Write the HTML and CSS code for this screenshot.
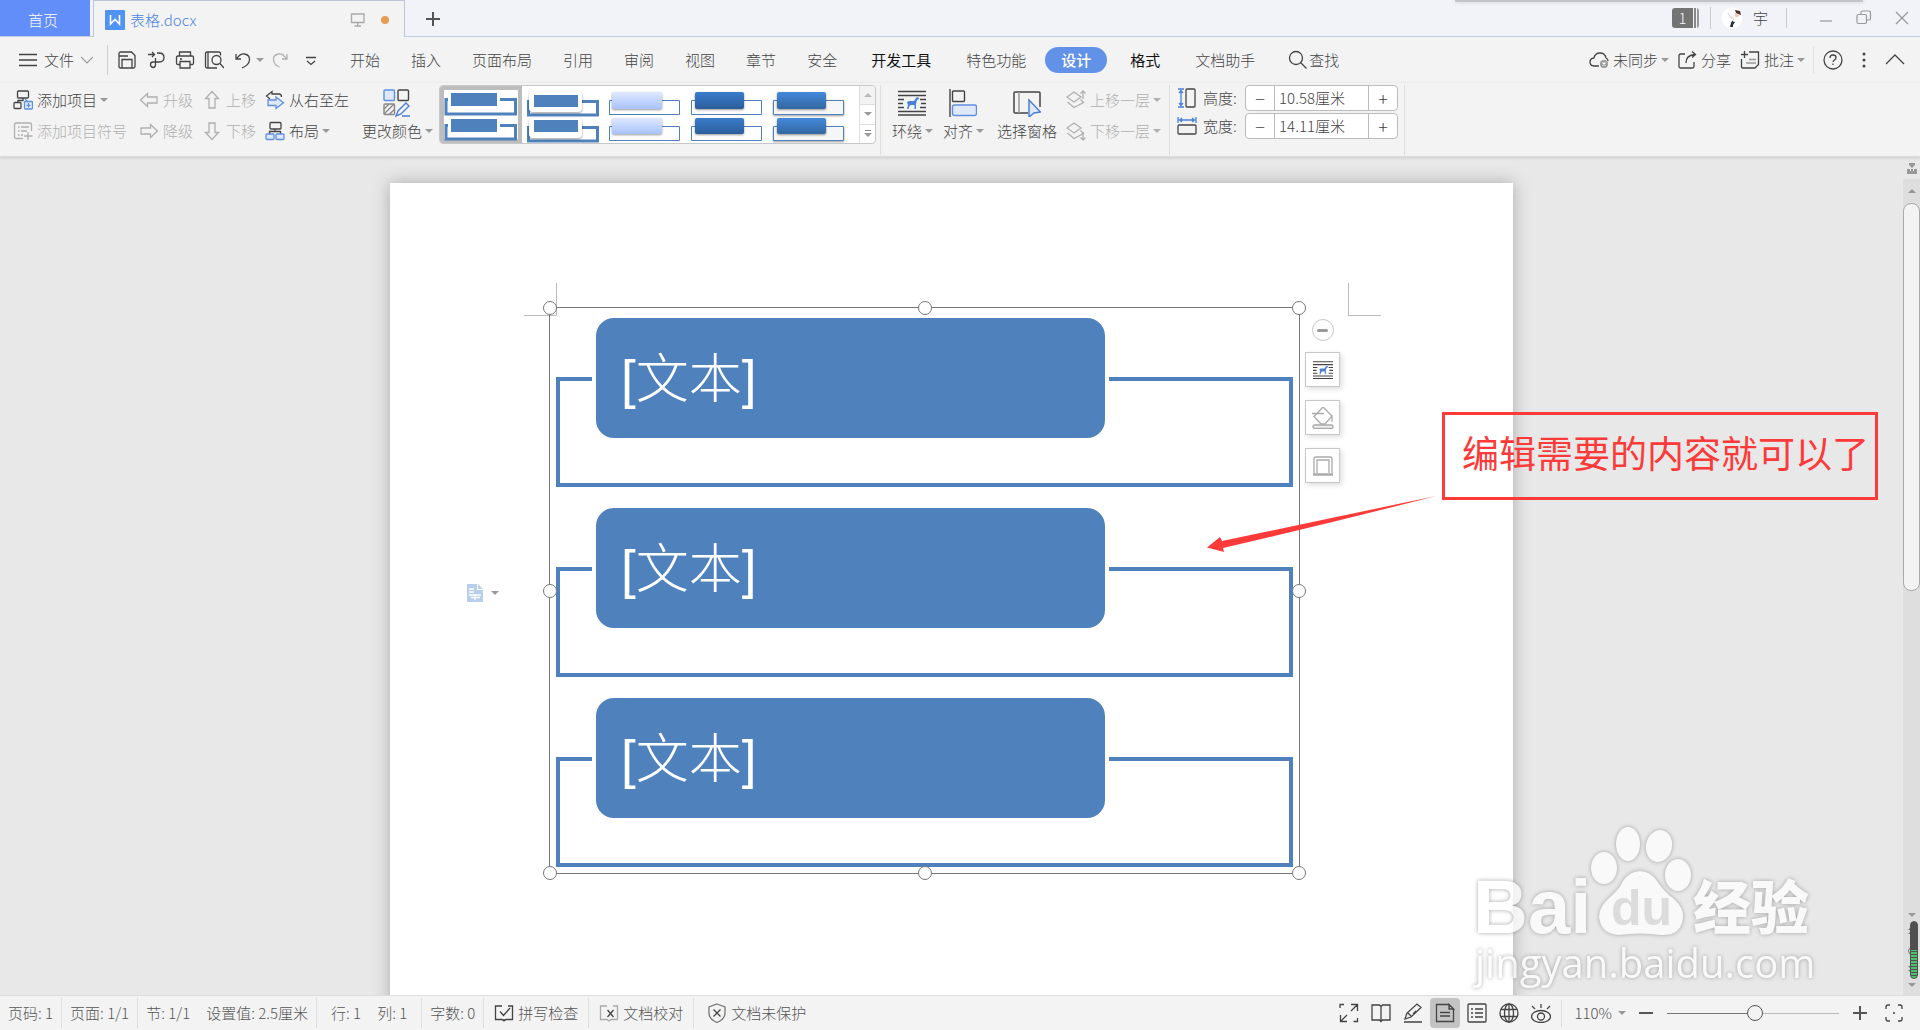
FILE: index.html
```html
<!DOCTYPE html>
<html lang="zh-CN">
<head>
  <meta charset="utf-8">
  <title>表格.docx</title>
  <meta name="viewport" content="width=device-width, initial-scale=1">
  <link rel="stylesheet" href="styles.css">
</head>
<body>
  <svg class="sprite" aria-hidden="true">
    <symbol id="i-wrap" viewBox="0 0 28 26">
      <path d="M0 1.500h28M0 5.500h28M0 9.500h6M0 13.500h5M0 17.500h6M22 9.500h6M23 13.500h5M22 17.500h6M0 21.500h28M0 25h28" fill="none" stroke="#444" stroke-width="1.500"/>
      <path d="M9 12l2-1h5l2-3 1-1 2 1v1l-2 1-1 4v5h-1.500v-4h-4l-1 1-1 3H9l1-4z" fill="#4a80d8"/>
    </symbol>
    <symbol id="i-left" viewBox="0 0 20 20"><path d="M1.500 10l7-6.500V7h9.500v6H8.500v3.500z"/></symbol>
    <symbol id="i-right" viewBox="0 0 20 20"><path d="M18.500 10l-7-6.500V7H2v6h9.500v3.500z"/></symbol>
    <symbol id="i-layout" viewBox="0 0 20 20">
      <rect x="5" y="1.500" width="11" height="6.500" rx="1"/><path d="M10 8v2.500M4.500 13v-2.500h11V13"/>
      <g stroke="#5f8fe0" fill="#dfe8f8"><rect x="1" y="13" width="8" height="5.500" rx="1"/><rect x="11" y="13" width="8" height="5.500" rx="1"/></g>
    </symbol>
    <symbol id="i-layers" viewBox="0 0 20 20">
      <path d="M1 7l7-5 7 5-7 5zM1.500 12L8 17.500l9.500-5-3-3"/>
    </symbol>
    <linearGradient id="g-light" x2="0" y2="1"><stop stop-color="#dfe8ff"/><stop offset="1" stop-color="#a8c3fb"/></linearGradient>
    <linearGradient id="g-dark" x2="0" y2="1"><stop stop-color="#3a7ccc"/><stop offset="1" stop-color="#2c5d9b"/></linearGradient>
    <linearGradient id="g-mid" x2="0" y2="1"><stop stop-color="#4489dc"/><stop offset="1" stop-color="#33679f"/></linearGradient>
  </svg>

  <header class="titlebar">
    <button class="home">首页</button>
    <div class="doc-tab">
      <svg class="w-logo" width="20" height="20" viewBox="0 0 20 20"><rect width="20" height="20" rx="1" fill="#4f94f3"/><path d="M5.500 5v9l4.500-4.500 4.500 4.500V5" fill="none" stroke="#fff" stroke-width="1.600"/></svg>
      <span>表格.docx</span>
      <svg class="screen" width="16" height="16" viewBox="0 0 16 16"><path d="M1.500 2h12.500v8.500H1.500zM7.700 10.500v3M4.500 14h6.500" fill="none" stroke="#aaa" stroke-width="1.300"/></svg>
      <i class="unsaved"></i>
    </div>
    <button class="new-tab" aria-label="新建"><svg width="16" height="16" viewBox="0 0 16 16"><path d="M8 1v14M1 8h14" stroke="#555" stroke-width="2"/></svg></button>
    <div class="top-shadow"></div>
    <div class="win">
      <span class="badge">1</span>
      <svg class="avatar" width="22" height="22" viewBox="0 0 22 22"><circle cx="11" cy="11" r="10.500" fill="#fff"/><path d="M14 3l5 1 1 4-3-1-2-1z" fill="#4a3228"/><path d="M14 6l4 2-1 2-3 0z" fill="#f3c9b0"/><path d="M9 9l4 3-2 2M7 6l4 6" stroke="#dcd3cc" fill="none"/><path d="M11 14l3 1-2 3v2h-3l1-4z" fill="#22303f"/></svg>
      <span class="user">宇</span>
      <button aria-label="最小化"><svg width="16" height="16" viewBox="0 0 16 16"><path d="M2 11h12" stroke="#aaa" stroke-width="1.500"/></svg></button>
      <button aria-label="还原"><svg width="16" height="16" viewBox="0 0 16 16" fill="none" stroke="#999" stroke-width="1.200"><rect x="1" y="4.500" width="9.500" height="9" rx="1.500"/><path d="M5 4.500V2.500q0-1.500 1.500-1.500h6.500q1.500 0 1.500 1.500v6q0 1.500-1.500 1.500h-2"/></svg></button>
      <button aria-label="关闭"><svg width="16" height="16" viewBox="0 0 16 16"><path d="M2 2l12 12M14 2L2 14" stroke="#999" stroke-width="1.200"/></svg></button>
    </div>
  </header>

  <nav class="menubar">
    <button class="file">
      <svg width="18" height="14" viewBox="0 0 18 14"><path d="M0 1.500h18M0 7h18M0 12.500h18" stroke="#444" stroke-width="1.300"/></svg>
      文件
      <svg width="12" height="12" viewBox="0 0 12 12"><path d="M0 3l6 6 6-6" fill="none" stroke="#999" stroke-width="1.200"/></svg>
    </button>
    <div class="quick">
      <button aria-label="保存"><svg class="ico" viewBox="0 0 20 20"><path d="M2 3.500Q2 2 3.500 2h11L18 5.500v11q0 1.500-1.500 1.500h-13Q2 18 2 16.500zM2 6h9M5 18V9.500h10V18"/></svg></button>
      <button aria-label="输出为PDF"><svg class="ico" viewBox="0 0 20 20"><path d="M2 4.500h6.500M6 2l2.500 2.500L6 7M11 3h2q5 0 5 4.500T13 12H7q-2.500 0-2.500 2.500T7 17.500q2.500 0 2.500-3V8"/></svg></button>
      <button aria-label="打印"><svg class="ico" viewBox="0 0 20 20"><path d="M4.500 6V2h11v4M5 14.500H2.500Q1.500 14.500 1.500 13V7.500Q1.500 6 3 6h14q1.500 0 1.500 1.500V13q0 1.500-1 1.500H15M5 11.500h10V18H5zM5 9h2"/></svg></button>
      <button aria-label="打印预览"><svg class="ico" viewBox="0 0 20 20"><path d="M16.500 5.500v-2q0-1.500-1.500-1.500H3Q1.500 2 1.500 3.500v13Q1.500 18 3 18h10M4 2v16M16 13.500l4 4.500"/><circle cx="12.500" cy="10" r="4.500"/></svg></button>
      <button class="undo" aria-label="撤销"><svg class="ico" viewBox="0 0 20 20"><path d="M3 4v5h5M3.500 9Q7 3.500 11.500 4 17 5 16.500 10T9 18"/></svg><i class="caret"></i></button>
      <button class="off" aria-label="恢复"><svg class="ico" viewBox="0 0 20 20"><path d="M17 4v5h-5M16.500 9Q13 3.500 8.500 4 3 5 3.500 10t6 7"/></svg></button>
      <button class="more" aria-label="自定义"><svg class="ico" viewBox="0 0 20 20"><path d="M5 7.500h10M6 11l4 3.500 4-3.500"/></svg></button>
    </div>
    <div class="tabs">
      <button>开始</button><button>插入</button><button>页面布局</button><button>引用</button><button>审阅</button><button>视图</button><button>章节</button><button>安全</button>
    </div>
    <div class="tabs extra">
      <button class="dark">开发工具</button><button>特色功能</button><button class="active">设计</button><button class="dark">格式</button><button>文档助手</button>
    </div>
    <button class="find"><svg class="ico" viewBox="0 0 20 20"><circle cx="8" cy="8" r="6.500"/><path d="M12.500 12.500l6 6"/></svg>查找</button>
    <div class="account">
      <button><svg class="ico" viewBox="0 0 20 20"><path d="M10 16H5Q1 15.500 1 12t4-4q1-5 6-5t6 5q2 1 2 3"/><circle cx="15" cy="14" r="4" fill="#999" stroke="none"/><path d="M13.500 12.500l3 3M16.500 12.500l-3 3" stroke="#fff"/></svg>未同步<i class="caret"></i></button>
      <button><svg class="ico" viewBox="0 0 20 20"><path d="M8 4H3.500Q2 4 2 5.500v11Q2 18 3.500 18h12q1.500 0 1.500-1.500V12M9 13q0-8 9-8.500M15 1.500l3.500 3-3.500 3"/></svg>分享</button>
      <button><svg class="ico" viewBox="0 0 20 20"><path d="M9 2h9.500v12.500L15 18H2.500Q1.500 18 1.500 17V9M4.500 1v7M1 4.500h7"/><path d="M6 13h10M9 9.500h7" stroke="#999"/></svg>批注<i class="caret"></i></button>
      <span class="bar"></span>
      <button aria-label="帮助"><svg class="ico" viewBox="0 0 20 20"><circle cx="10" cy="10" r="9"/><path d="M7 8q0-3 3-3t3 2.500Q13 9 11.500 10T10 12M10 13.500V15"/></svg></button>
      <button class="dots" aria-label="更多"><svg width="4" height="20" viewBox="0 0 4 20" fill="#444"><circle cx="2" cy="4" r="1.500"/><circle cx="2" cy="10" r="1.500"/><circle cx="2" cy="16" r="1.500"/></svg></button>
      <button aria-label="收起功能区"><svg class="ico" viewBox="0 0 20 20"><path d="M1 14l9-9 9 9"/></svg></button>
    </div>
  </nav>

  <section class="ribbon">
    <div class="grid">
      <button><svg class="ico" viewBox="0 0 20 20"><rect x="4.500" y="1" width="11" height="7" rx="1"/><path d="M10 8v2.500H5V12"/><rect x="1" y="12.500" width="7" height="6" rx="1"/><path d="M12 9l3 3" stroke="#5f8fe0"/><rect x="11.500" y="11.500" width="8" height="7.500" rx="1" stroke="#5f8fe0" fill="#dfe8f8"/><path d="M15.500 13v4.500M13.500 15.300h4" stroke="#5f8fe0"/></svg>添加项目<i class="caret"></i></button>
      <button disabled><svg class="ico" viewBox="0 0 20 20"><use href="#i-left"/></svg>升级</button>
      <button disabled><svg class="ico" viewBox="0 0 20 20"><path d="M10 1.500l6.500 7H13V18H7V8.500H3.500z"/></svg>上移</button>
      <button><svg class="ico" viewBox="0 0 20 20"><path d="M5 9L1.500 6 7 1.500V4h7q2.500 0 2.500 3"/><path d="M3 10h8V7l7.500 5.700L11 18.500v-3H3z" stroke="#5f8fe0" fill="#dfe8f8"/></svg>从右至左</button>
      <button disabled><svg class="ico" viewBox="0 0 20 20"><path d="M10 17.500H3Q1.500 17.500 1.500 16V3.500Q1.500 2 3 2h14q1.500 0 1.500 1.500V10M5 6h1.500M8 6h8M5 10h1.500M8 10h6M5 14h1.500M8 14h2M15 11v8M11 15h8.500"/></svg>添加项目符号</button>
      <button disabled><svg class="ico" viewBox="0 0 20 20"><use href="#i-right"/></svg>降级</button>
      <button disabled><svg class="ico" viewBox="0 0 20 20"><path d="M10 18.500l6.500-7H13V2H7v9.500H3.500z"/></svg>下移</button>
      <button><svg class="ico" viewBox="0 0 20 20"><use href="#i-layout"/></svg>布局<i class="caret"></i></button>
    </div>
    <button class="big colors">
      <svg width="28" height="28" viewBox="0 0 28 28" fill="none" stroke-width="1.400"><rect x="1" y="1" width="10.500" height="10.500" rx="1" stroke="#5f8fe0" fill="#dfe8f8"/><rect x="15" y="1" width="10.500" height="10.500" rx="1" stroke="#444"/><rect x="1" y="15" width="10.500" height="10.500" rx="1" stroke="#888"/><path d="M1 20l5-5M1 25l10-10M6 25.500l5.500-5" stroke="#888"/><path d="M13 27l2-5 8-8 3 3-8 8zM19 27h8" stroke="#4a80d8"/></svg>
      <span>更改颜色<i class="caret"></i></span>
    </button>
    <div class="gallery">
      <button class="picked" aria-label="样式 1"><svg width="74" height="52" viewBox="0 0 74 52"><g fill="none" stroke="#4f81bd" stroke-width="3"><path d="M4 10.500H2V25H71.500V10.500H56"/><path d="M4 36.500H2V50H71.500V36.500H56"/></g><path d="M7 4h46v13H7zM7 30h46v13H7z" fill="#4f81bd"/></svg></button>
      <button aria-label="样式 2"><svg width="74" height="56" viewBox="0 0 74 56"><g fill="none" stroke="#4f81bd" stroke-width="3"><path d="M2.500 14.500h69V28h-69z"/><path d="M2.500 40.500h69V54h-69z"/></g><g class="lift" fill="#fff"><rect x="3" y="5" width="53" height="20" rx="4"/><rect x="3" y="31" width="53" height="20" rx="4"/></g><path d="M8 8h44v12H8zM8 33h44v12H8z" fill="#4f81bd"/></svg></button>
      <button aria-label="样式 3"><svg width="74" height="56" viewBox="0 0 74 56"><path d="M1.500 13.500h70v14h-70zM1.500 39.500h70v14h-70z" fill="#fff" stroke="#4f81bd"/><g class="lift" fill="url(#g-light)"><rect x="4" y="5" width="50" height="17" rx="2"/><rect x="4" y="31" width="50" height="16" rx="2"/></g></svg></button>
      <button aria-label="样式 4"><svg width="74" height="56" viewBox="0 0 74 56"><path d="M1.500 13.500h70v14h-70zM1.500 39.500h70v14h-70z" fill="#fff" stroke="#4f81bd"/><g class="lift" fill="url(#g-dark)"><rect x="5" y="5" width="49" height="17" rx="2"/><rect x="5" y="31" width="49" height="16" rx="2"/></g></svg></button>
      <button aria-label="样式 5"><svg width="74" height="56" viewBox="0 0 74 56"><path class="lift" d="M1.500 13.500h70v14h-70zM1.500 39.500h70v14h-70z" fill="#f6f6f6" stroke="#4f81bd"/><g class="lift" fill="url(#g-mid)"><rect x="5" y="5" width="49" height="17" rx="2"/><rect x="5" y="31" width="49" height="16" rx="2"/></g></svg></button>
      <div class="pager">
        <button aria-label="上一行"><i class="caret up"></i></button>
        <button aria-label="下一行"><i class="caret"></i></button>
        <button class="all" aria-label="更多样式"><i class="caret"></i></button>
      </div>
    </div>
    <span class="bar"></span>
    <button class="big wrap"><svg width="28" height="28" viewBox="0 0 28 26"><use href="#i-wrap"/></svg><span>环绕<i class="caret"></i></span></button>
    <button class="big align"><svg width="28" height="28" viewBox="0 0 28 28" fill="none" stroke="#444" stroke-width="1.400"><path d="M1 0v28"/><rect x="3.500" y="2" width="12" height="10.500" rx="1"/><rect x="3.500" y="16" width="24" height="10.500" rx="2" stroke="#5f8fe0" fill="#dfe8f8"/></svg><span>对齐<i class="caret"></i></span></button>
    <button class="big"><svg width="28" height="28" viewBox="0 0 28 28" fill="none" stroke="#444" stroke-width="1.500"><path d="M15 24H2q-1 0-1-1V4q0-1 1-1h24q1 0 1 1v14"/><path d="M6 3v21" stroke="#999"/><path d="M16 11l11.500 12-6.500 1-5 4z" stroke="#4a80d8" fill="#dfe8f8"/></svg><span>选择窗格</span></button>
    <div class="grid order">
      <button disabled><svg class="ico" viewBox="0 0 20 20"><use href="#i-layers"/><path d="M17 9V1M14.500 3.500L17 1l2.500 2.500"/></svg>上移一层<i class="caret"></i></button>
      <button disabled><svg class="ico" viewBox="0 0 20 20"><use href="#i-layers"/><path d="M17 11v8M14.500 16.500L17 19l2.500-2.500"/></svg>下移一层<i class="caret"></i></button>
    </div>
    <span class="bar"></span>
    <div class="size">
      <div class="row">
        <svg class="ico" viewBox="0 0 20 20"><rect x="9" y="1" width="9" height="18" rx="1"/><path d="M1 1h6M1 19h6M4 3v14M2 5l2-2.500L6 5M2 15l2 2.500L6 15" stroke="#4a80d8"/></svg>
        <label for="h">高度:</label>
        <div class="spin"><button aria-label="减小高度">−</button><input id="h" value="10.58厘米"><button aria-label="增大高度">+</button></div>
      </div>
      <div class="row">
        <svg class="ico" viewBox="0 0 20 20"><rect x="1" y="9" width="18" height="9" rx="1"/><path d="M1 1v6M19 1v6M3 4h14M5 2L2.500 4 5 6M15 2l2.500 2L15 6" stroke="#4a80d8"/></svg>
        <label for="w">宽度:</label>
        <div class="spin"><button aria-label="减小宽度">−</button><input id="w" value="14.11厘米"><button aria-label="增大宽度">+</button></div>
      </div>
    </div>
    <span class="bar"></span>
  </section>

  <main class="workspace">
    <div class="canvas">
      <article class="page">
        <i class="margin-mark left"></i>
        <i class="margin-mark right"></i>
        <button class="paste" aria-label="版式">
          <svg width="16" height="18" viewBox="0 0 16 18"><path d="M0 0h10v6h6v12H0z" fill="#b9cdec"/><path d="M11 0l5 5h-5z" fill="#b9cdec"/><path d="M2 5h5M2 8h5M2 11h12M4 13.500h9M8 11v5" stroke="#fff" stroke-width="1.300"/></svg>
          <i class="caret"></i>
        </button>

        <div class="frame">
          <div class="node"><div class="outline"></div><div class="label">[文本]</div></div>
          <div class="node"><div class="outline"></div><div class="label">[文本]</div></div>
          <div class="node"><div class="outline"></div><div class="label">[文本]</div></div>
          <i class="handle n w"></i><i class="handle n"></i><i class="handle n e"></i>
          <i class="handle w"></i><i class="handle e"></i>
          <i class="handle s w"></i><i class="handle s"></i><i class="handle s e"></i>
        </div>

        <div class="float-tools">
          <button class="fold" aria-label="收起"></button>
          <button aria-label="环绕"><svg width="20" height="20" viewBox="0 0 28 28"><use href="#i-wrap"/></svg></button>
          <button aria-label="填充"><svg width="22" height="22" viewBox="0 0 22 22" fill="none" stroke="#aaa" stroke-width="1.300"><path d="M11 0l9 9-7 8H9L2 9.500zM0 6.500h12M20 8v7"/><rect x="1" y="18" width="20" height="3.500" rx="1.500" fill="#eee"/></svg></button>
          <button aria-label="轮廓"><svg width="20" height="20" viewBox="0 0 20 20" fill="none" stroke="#aaa" stroke-width="1.300"><path d="M1 17V3q0-2 2-2h14q2 0 2 2v14M4 17V4h12v13"/><path d="M0 18.500h20" stroke-width="2.500"/></svg></button>
        </div>

        <svg class="arrow" width="230" height="58" viewBox="0 0 230 58"><path d="M0 52.500L13 42l2 4Q120 24 229 1 120 29 16 53l1 4z" fill="#fc3a3a"/></svg>
        <p class="note">编辑需要的内容就可以了</p>
      </article>
    </div>

    <div class="scroll">
      <svg class="ruler-toggle" width="10" height="11" viewBox="0 0 10 11"><path d="M2 0h6v2L5 5 2 2zM0 6h10v5H0z" fill="#999"/><path d="M3.500 6v2M6.500 6v2" stroke="#e8e8e8"/></svg>
      <div class="track">
        <i class="caret up"></i>
        <div class="thumb"></div>
        <div class="jump">
          <i class="caret"></i>
          <svg width="10" height="52" viewBox="0 0 10 52" fill="#777"><path d="M5 2l4 4H1zM5 6l4 4H1zM5 50l4-4H1zM5 46l4-4H1z"/><circle cx="5" cy="27" r="3.500" fill="none" stroke="#777"/></svg>
          <i class="caret"></i>
          <span class="meter"></span>
        </div>
      </div>
    </div>

    <svg class="watermark" width="350" height="170" viewBox="0 0 350 170" fill="#fff">
      <text class="wm-bai" x="0" y="108">Bai</text>
      <ellipse cx="131" cy="43" rx="13" ry="16"/><ellipse cx="155" cy="19" rx="12" ry="17"/><ellipse cx="186" cy="21" rx="13" ry="16" transform="rotate(12 186 21)"/><ellipse cx="205" cy="50" rx="13" ry="16"/>
      <path d="M167 46q10 0 17 10 7 11 17 18 10 9 9 19-2 18-22 17-21-3-42 0-18-1-20-18 0-10 10-19 9-7 14-17 7-10 17-10z"/>
      <text class="wm-du" x="138" y="100">du</text>
      <text class="wm-exp" x="220" y="104">经验</text>
      <text class="wm-url" x="2" y="153">jingyan.baidu.com</text>
    </svg>
  </main>

  <footer class="status">
    <span class="cell">页码: 1</span>
    <span class="cell">页面: 1/1</span>
    <span class="cell"><span>节: 1/1</span><span>设置值: 2.5厘米</span></span>
    <span class="cell wide"><span>行: 1</span><span>列: 1</span></span>
    <span class="cell">字数: 0</span>
    <button class="cell check"><svg class="ico" viewBox="0 0 20 20"><path d="M8 3H1.500v13.500H8l2 1.500 2-1.500h6.500V3H14M10 18v-2M6 8.500l3.500 4L16 5"/></svg>拼写检查</button>
    <button class="cell check"><svg class="ico" viewBox="0 0 20 20"><path d="M8 3H1.500v13.500H8l2 1.500 2-1.500h6.500V3H14" stroke="#aaa"/><path d="M8.500 7l6 7M14.500 7l-6 7"/></svg>文档校对</button>
    <button class="cell check"><svg class="ico" viewBox="0 0 20 20"><path d="M10 1l8 3v6q0 6-8 9.500Q2 16 2 10V4z" stroke="#777"/><path d="M6.500 6.500l7 7M13.500 6.500l-7 7"/></svg>文档未保护</button>

    <div class="views">
      <button aria-label="全屏"><svg class="ico" viewBox="0 0 20 20"><path d="M1 5V1.500h4M12 1.500h6.500V8M18.500 15v3.500h-4M8 18.500H1.500V12M2 18l6-6M18 2l-6 6"/></svg></button>
      <button aria-label="阅读版式"><svg class="ico" viewBox="0 0 20 20"><path d="M1 2h7.500L10 3.500 11.500 2H19v15h-7.500L10 18.500 8.500 17H1zM10 3.500v15"/></svg></button>
      <button aria-label="写作模式"><svg class="ico" viewBox="0 0 20 20"><path d="M2 16l2-6 10-9 4 3.500L8 14zM5 10l3 3M1 19h18M13 8l-3 3"/></svg></button>
      <button class="on" aria-label="页面视图"><svg class="ico" viewBox="0 0 20 20"><path d="M1.500 1.500H14L18.500 6v12.500h-17zM5 9.500h10M5 13h10M14 1.500V6h4.500z"/></svg></button>
      <button aria-label="大纲"><svg class="ico" viewBox="0 0 20 20"><rect x="1" y="1" width="18" height="18" rx="1"/><path d="M4 6h2M8 6h8M4 10h2M8 10h8M4 14h2M8 14h8"/></svg></button>
      <button aria-label="Web版式"><svg class="ico" viewBox="0 0 20 20"><circle cx="10" cy="10" r="9"/><ellipse cx="10" cy="10" rx="4.500" ry="9"/><path d="M10 1v18M2 6.500h16M2 13.500h16"/></svg></button>
      <button aria-label="护眼模式"><svg class="ico" viewBox="0 0 20 20"><ellipse cx="10" cy="13.500" rx="9.500" ry="6"/><circle cx="10" cy="13.500" r="3.500"/><path d="M10 1v4M1 3l3 3M19 3l-3 3"/></svg></button>
    </div>
    <span class="bar"></span>
    <button class="pct">110%<i class="caret"></i></button>
    <button class="step" aria-label="缩小"><svg width="16" height="16" viewBox="0 0 16 16"><path d="M1 8h14" stroke="#555" stroke-width="2"/></svg></button>
    <input class="zoom" type="range" aria-label="缩放" min="0" max="100" value="51">
    <button class="step" aria-label="放大"><svg width="16" height="16" viewBox="0 0 16 16"><path d="M8 1v14M1 8h14" stroke="#555" stroke-width="2"/></svg></button>
    <button class="fit" aria-label="适合窗口"><svg class="ico" viewBox="0 0 20 20"><path d="M2 6V4q0-2 2-2h2M14 2h2q2 0 2 2v2M18 14v2q0 2-2 2h-2M6 18H4q-2 0-2-2v-2M9 10h2"/></svg></button>
  </footer>
</body>
</html>
```
FILE: styles.css
```css
*, *:before, *:after {
  box-sizing: border-box;
}
html, body {
  height: 100%;
  margin: 0;
}
body {
  display: flex;
  flex-direction: column;
  overflow: hidden;
  background: #f3f3f3;
  color: #444;
  font: 15px/20px "Noto Sans CJK SC", sans-serif;
  font-weight: 300;
  white-space: nowrap;
  cursor: default;
}
button, input {
  margin: 0;
  padding: 0;
  border: none;
  background: transparent;
  color: inherit;
  font: inherit;
}
button {
  display: flex;
  align-items: center;
}
svg {
  flex: none;
}
.sprite {
  position: absolute;
  width: 0;
  height: 0;
}
.ico {
  width: 20px;
  height: 20px;
  fill: none;
  stroke: #444;
  stroke-width: 1.3;
}
.off .ico, button:disabled .ico {
  stroke: #b0b0b0;
}
.caret {
  display: inline-block;
  flex: none;
  margin: 0 -1px;
  border: 4px solid transparent;
  border-top-color: #999;
  border-bottom: none;
}
.caret.up {
  border-top: none;
  border-bottom: 4px solid #999;
}
.bar {
  width: 1px;
  background: #ddd;
}

/* title bar */
.titlebar {
  flex: none;
  display: flex;
  height: 37px;
  position: relative;
  background: #f1f3f9;
  border-bottom: 1px solid #c3cde0;
}
.home {
  width: 90px;
  justify-content: center;
  padding: 4px 4px 0 0;
  background: #628efa;
  color: #fff;
}
.doc-tab {
  display: flex;
  align-items: center;
  width: 312px;
  height: 37px;
  margin-left: 3px;
  padding: 2px 15px 0 11px;
  background: #f3f3f3;
  border: 1px solid #bcc5d9;
  border-bottom: none;
  color: #4a86e0;
}
.doc-tab span {
  margin: 0 auto 0 5px;
}
.screen {
  margin-right: 15px;
}
.unsaved {
  width: 8px;
  height: 8px;
  border-radius: 50%;
  background: #e59c55;
}
.new-tab {
  padding: 2px 20px 0;
}
.top-shadow {
  position: absolute;
  top: 0;
  right: 57px;
  width: 408px;
  height: 2px;
  background: #c4c4c8;
  box-shadow: 0 0 4px #c4c4c8;
}
.win {
  display: flex;
  align-items: center;
  margin-left: auto;
  padding-right: 10px;
}
.badge {
  width: 27px;
  height: 20px;
  margin-right: 11px;
  padding-right: 6px;
  border-radius: 3px;
  background: linear-gradient(to right, #747474 21px, #f1f3f9 21px, #f1f3f9 22px, #888 22px, #888 24px, #f1f3f9 24px, #f1f3f9 25px, #999 25px);
  color: #fff;
  font-size: 14px;
  text-align: center;
}
.avatar {
  box-sizing: content-box;
  padding-left: 10px;
  border-left: 1px solid #ccc;
}
.user {
  margin-left: 10px;
  padding-right: 18px;
  border-right: 1px solid #ccc;
}
.win button {
  margin-left: 22px;
}
.win .user + button {
  margin-left: 31px;
}

/* menu bar */
.menubar {
  flex: none;
  display: flex;
  align-items: center;
  height: 46px;
  padding-left: 19px;
}
.file {
  gap: 7px;
  height: 30px;
  padding-right: 14px;
  border-right: 1px solid #ccc;
}
.quick {
  display: flex;
  gap: 9px;
  margin: 0 29px 0 9px;
}
.quick .undo {
  gap: 4px;
}
.quick .more {
  margin-left: 3px;
}
.quick .off {
  margin-left: -1px;
}
.quick .undo, .quick .off {
  margin-right: -1px;
}
.tabs {
  display: flex;
  align-items: center;
  gap: 31px;
}
.tabs.extra {
  gap: 35px;
  margin-left: 34px;
}
.tabs .dark {
  color: #111;
  font-weight: 400;
}
.tabs .active {
  height: 26px;
  margin: 0 -12px 0 -16px;
  padding: 0 16px;
  border-radius: 13px;
  background: #6292e8;
  color: #fff;
  font-weight: 500;
}
.find {
  gap: 1px;
  margin-left: 33px;
}
.account {
  display: flex;
  align-items: center;
  gap: 9px;
  margin-left: auto;
  padding-right: 15px;
}
.account button {
  gap: 4px;
}
.account .bar {
  height: 26px;
}
.account .dots {
  margin: 0 10px;
}

/* ribbon */
.ribbon {
  flex: none;
  display: flex;
  height: 74px;
  padding: 2px 0 0 13px;
  position: relative;
  z-index: 1;
  border-bottom: 1px solid #dcdcdc;
  box-shadow: 0 1px 3px #ccc;
}
.ribbon .bar {
  height: 70px;
}
.grid {
  display: grid;
  grid-template: 30px 31px / 126px 63px 63px auto;
}
.grid button {
  gap: 4px;
}
button:disabled {
  color: #b0b0b0;
}
button:disabled .caret {
  border-top-color: #b0b0b0;
}
.grid.order {
  grid-template-columns: auto;
  margin: 0 9px 0 9px;
}
.big {
  flex-direction: column;
  gap: 4px;
  height: 62px;
  padding-top: 4px;
}
.big span {
  display: flex;
  align-items: center;
  gap: 4px;
}
.colors {
  margin: 0 7px 0 13px;
}
.wrap {
  margin-left: 11px;
}
.align {
  margin: 0 14px 0 11px;
}
.gallery {
  display: flex;
  width: 437px;
  height: 59px;
  margin-right: 4px;
  overflow: hidden;
  border: 1px solid #c8c8c8;
  border-radius: 4px;
  background: #fff;
}
.gallery > button {
  flex: none;
  width: 82px;
  justify-content: center;
}
.gallery .picked {
  border: 4px solid #bdbdbd;
}
.lift {
  filter: drop-shadow(0 1px 1px #0006);
}
.pager {
  display: flex;
  flex-direction: column;
  flex: none;
  width: 16px;
  margin-left: auto;
  border-left: 1px solid #ddd;
}
.pager button {
  flex: 1;
  justify-content: center;
  border-bottom: 1px solid #ddd;
}
.pager button:first-child {
  background: #f3f3f3;
}
.pager .up {
  border-bottom-color: #bbb;
}
.pager .all {
  flex-direction: column;
  gap: 2px;
  border-bottom: none;
}
.pager .all:before {
  content: "";
  width: 6px;
  height: 1px;
  background: #888;
}
.size {
  display: flex;
  flex-direction: column;
  gap: 2px;
  margin: 0 6px 0 7px;
}
.row {
  display: flex;
  align-items: center;
  height: 26px;
}
.row label {
  width: 42px;
  margin-left: 6px;
}
.spin {
  display: flex;
  width: 153px;
  height: 26px;
  border: 1px solid #bbb;
  border-radius: 4px;
  background: #fff;
}
.spin button {
  flex: none;
  width: 28px;
  justify-content: center;
  font-size: 18px;
}
.spin input {
  flex: 1;
  min-width: 0;
  padding-left: 4px;
  border: solid #bbb;
  border-width: 0 1px;
}

/* document */
.workspace {
  flex: 1;
  display: flex;
  min-height: 0;
  position: relative;
  overflow: hidden;
  background: #e8e8e8;
}
.canvas {
  flex: 1;
  padding-top: 26px;
}
.page {
  position: relative;
  width: 1123px;
  height: 1500px;
  margin: 0 auto;
  background: #fff;
  box-shadow: 0 0 16px #aaa;
}
.margin-mark {
  position: absolute;
  top: 100px;
  width: 33px;
  height: 33px;
  border-bottom: 1px solid #bbb;
}
.margin-mark.left {
  left: 134px;
  border-right: 1px solid #bbb;
}
.margin-mark.right {
  left: 958px;
  border-left: 1px solid #bbb;
}
.paste {
  position: absolute;
  left: 77px;
  top: 401px;
  gap: 9px;
}
.frame {
  position: absolute;
  left: 159px;
  top: 124px;
  width: 751px;
  height: 567px;
  padding: 10px 6px 0;
  border: 1px solid #777;
}
.node {
  position: relative;
  height: 190px;
  padding-top: 59px;
}
.outline {
  height: 110px;
  border: 4px solid #4f81bd;
}
.label {
  position: absolute;
  left: 36px;
  top: -4px;
  width: 517px;
  height: 128px;
  padding-left: 25px;
  border: 4px solid #fff;
  border-radius: 22px;
  background: #4f81bd;
  color: #fff;
  font: 53px/124px "Liberation Sans", "Noto Sans CJK SC", sans-serif;
  font-weight: 300;
}
.handle {
  position: absolute;
  left: 50%;
  top: 50%;
  width: 14px;
  height: 14px;
  margin: -7px;
  border: 1px solid #777;
  border-radius: 50%;
  background: #fff;
}
.handle.n { top: 0; }
.handle.s { top: 100%; }
.handle.w { left: 0; }
.handle.e { left: 100%; }
.float-tools {
  position: absolute;
  left: 915px;
  top: 136px;
  display: flex;
  flex-direction: column;
  align-items: center;
  gap: 13px;
}
.float-tools button {
  width: 35px;
  height: 35px;
  justify-content: center;
  border: 1px solid #c8c8c8;
  background: #fff;
  box-shadow: 2px 2px 5px #ddd;
}
.float-tools .fold {
  width: 22px;
  height: 22px;
  margin-bottom: -2px;
  border-radius: 50%;
  box-shadow: none;
}
.fold:before {
  content: "";
  width: 11px;
  height: 3px;
  border-radius: 2px;
  background: #999;
}
.arrow {
  position: absolute;
  left: 817px;
  top: 312px;
}
.note {
  position: absolute;
  left: 1052px;
  top: 229px;
  width: 436px;
  height: 88px;
  margin: 0;
  padding-left: 17px;
  border: 3px solid #fc3a3a;
  color: #fc3a3a;
  font-size: 37px;
  font-weight: 400;
  line-height: 74px;
}

.scroll {
  display: flex;
  flex-direction: column;
  align-items: center;
  width: 17px;
  padding-top: 6px;
  z-index: 1;
}
.track {
  flex: 1;
  display: flex;
  flex-direction: column;
  align-items: center;
  width: 17px;
  margin-top: 5px;
  padding: 10px 0 8px;
  background: #dedede;
}
.thumb {
  width: 17px;
  height: 388px;
  margin-top: 10px;
  border: 1px solid #aaa;
  border-radius: 8px;
  background: #f3f3f3;
}
.jump {
  position: relative;
  display: flex;
  flex-direction: column;
  align-items: center;
  gap: 7px;
  margin-top: auto;
}
.meter {
  position: absolute;
  left: 3px;
  top: 8px;
  width: 8px;
  height: 58px;
  border-radius: 4px;
  background: linear-gradient(#505050 28px, transparent 28px), repeating-linear-gradient(#4bc16c 0 2px, #505050 2px 3px);
  border: 1px solid #505050;
}
.watermark {
  position: absolute;
  right: 97px;
  bottom: 0;
  opacity: .75;
  filter: drop-shadow(0 0 2px #888);
}
.wm-bai {
  font: bold 76px "Liberation Sans", sans-serif;
}
.wm-du {
  fill: #d8d8d8;
  font: bold 50px "Liberation Sans", sans-serif;
}
.wm-exp {
  font: 900 58px "Noto Sans CJK SC", sans-serif;
}
.wm-url {
  font: 40px "Open Sans", sans-serif;
}

/* status bar */
.status {
  flex: none;
  display: flex;
  align-items: center;
  height: 35px;
  border-top: 1px solid #ddd;
  color: #555;
}
.status .cell {
  display: flex;
  gap: 16px;
  height: 30px;
  align-items: center;
  padding: 0 8px;
  border-right: 1px solid #ddd;
}
.status .wide {
  padding: 0 14px;
}
.status .check {
  gap: 4px;
  padding: 0 10px;
}
.status .check:nth-of-type(3) {
  padding-left: 13px;
  border: none;
}
.views {
  display: flex;
  gap: 2px;
  margin-left: auto;
}
.views button {
  width: 30px;
  height: 30px;
  justify-content: center;
  border-radius: 4px;
}
.views .on {
  background: #c3c3c3;
}
.status .bar {
  height: 27px;
  margin: 0 12px 0 5px;
}
.pct {
  gap: 7px;
}
.step {
  margin: 0 13px;
}
.zoom {
  width: 172px;
  height: 20px;
  -webkit-appearance: none;
  appearance: none;
}
.zoom::-webkit-slider-runnable-track {
  height: 1px;
  background: linear-gradient(to right, #777 50%, #bbb 50%);
}
.zoom::-webkit-slider-thumb {
  -webkit-appearance: none;
  width: 16px;
  height: 16px;
  margin-top: -8px;
  border: 1px solid #555;
  border-radius: 50%;
  background: #f3f3f3;
}
.fit {
  margin: 0 16px 0 3px;
}
```
